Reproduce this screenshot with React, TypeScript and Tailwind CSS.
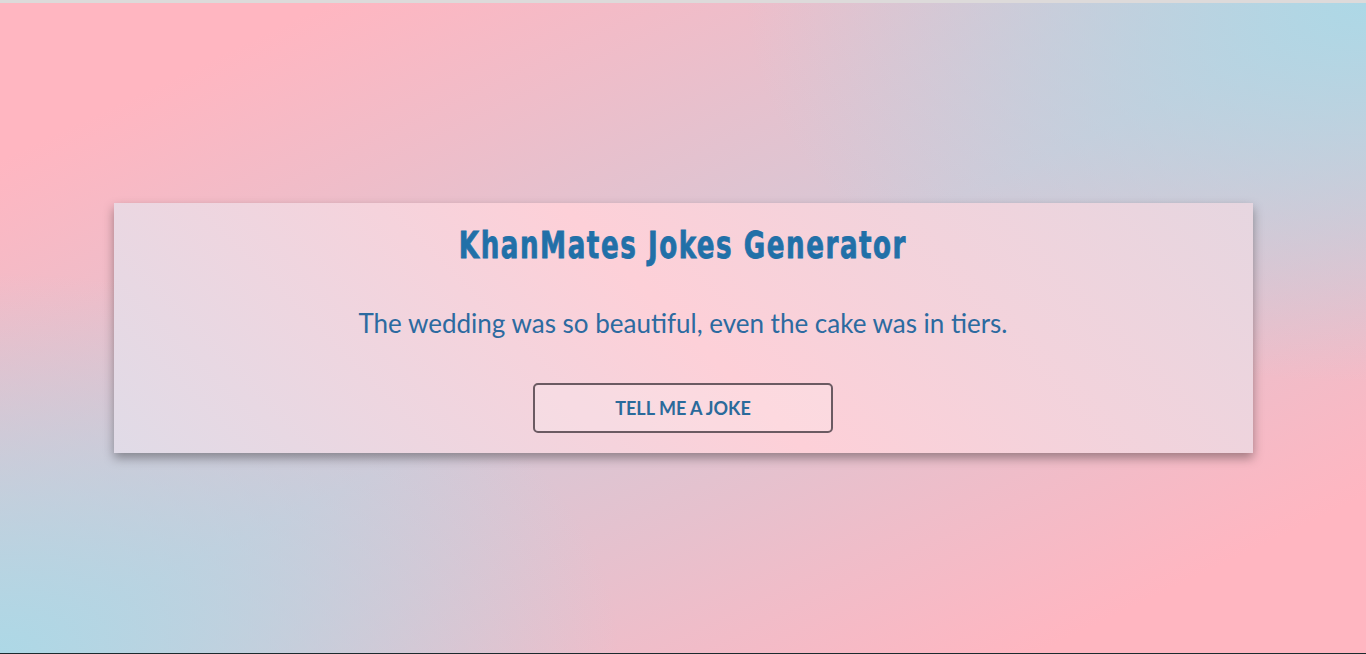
export default function App() {
  return (
    <div className="h-[654px] w-full box-border border-t-[3px] border-b border-t-[#dddada] border-b-[#1c2a2e] bg-[radial-gradient(620px_380px_at_100%_0%,#add8e6_0%,rgba(173,216,230,0)_100%),radial-gradient(620px_380px_at_0%_100%,#add8e6_0%,rgba(173,216,230,0)_100%),linear-gradient(to_bottom_right,#ffb6c1_0%,#ffb6c1_12%,#d6c8d6_50%,#ffb6c1_88%,#ffb6c1_100%)] flex items-center justify-center">
      {/* Card */}
      <div className="w-[1139px] h-[250px] flex flex-col items-center pt-[18px] bg-[linear-gradient(45deg,#e0dbe7_0%,#fdd0d8_50%,#e6d6e0_100%)] shadow-[0_5px_10px_rgba(0,0,0,0.35)]">
        <h1 className="text-[#2170a8] text-[38px] leading-[48px] font-bold tracking-[2px] scale-x-[0.765] [-webkit-text-stroke:0.8px_#2170a8] font-['Impact','DejaVu_Sans_Condensed','DejaVu_Sans',sans-serif]">
          KhanMates Jokes Generator
        </h1>
        <p className="mt-[38px] text-[#2c6aa0] text-[26px] leading-[32px] font-['Segoe_UI','Lato','Noto_Sans',sans-serif]">
          The wedding was so beautiful, even the cake was in tiers.
        </p>
        <button className="mt-[44px] w-[300px] h-[50px] border-2 border-[#6b5a62] rounded-[5px] bg-white/20 text-[#2a6a9b] text-[18px] font-bold uppercase font-['Segoe_UI','Lato','Noto_Sans',sans-serif]">
          Tell me a joke
        </button>
      </div>
    </div>
  );
}
